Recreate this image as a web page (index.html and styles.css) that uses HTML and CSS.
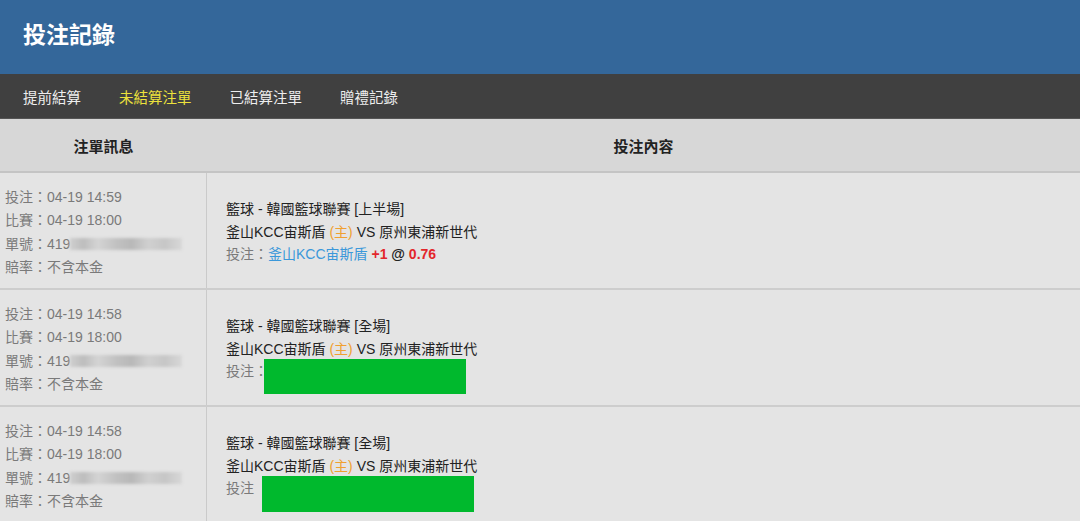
FILE: index.html
```html
<!DOCTYPE html>
<html lang="zh-Hant">

<head>
    <meta charset="UTF-8">
    <meta name="viewport" content="width=device-width, initial-scale=1.0">
    <title>投注記錄</title>
    <link rel="stylesheet" href="styles.css">
</head>

<body>
    <header class="topbar">
        <h1>投注記錄</h1>
    </header>
    <nav class="tabs">
        <a href="#">提前結算</a>
        <a href="#" class="active">未結算注單</a>
        <a href="#">已結算注單</a>
        <a href="#">贈禮記錄</a>
    </nav>

    <div class="table">
        <div class="row head">
            <div class="cell">注單訊息</div>
            <div class="cell">投注內容</div>
        </div>

        <div class="row">
            <div class="cell info">
                <div>投注：04-19 14:59</div>
                <div>比賽：04-19 18:00</div>
                <div>單號：419<span class="blur"></span></div>
                <div>賠率：不含本金</div>
            </div>
            <div class="cell detail">
                <div class="dark">籃球 - 韓國籃球聯賽 [上半場]</div>
                <div class="dark">釜山KCC宙斯盾 <span class="home">(主)</span> VS 原州東浦新世代</div>
                <div>投注：<span class="team">釜山KCC宙斯盾</span> <span class="red">+1</span> <span class="at">@</span> <span class="red">0.76</span></div>
            </div>
        </div>

        <div class="row">
            <div class="cell info">
                <div>投注：04-19 14:58</div>
                <div>比賽：04-19 18:00</div>
                <div>單號：419<span class="blur"></span></div>
                <div>賠率：不含本金</div>
            </div>
            <div class="cell detail">
                <div class="dark">籃球 - 韓國籃球聯賽 [全場]</div>
                <div class="dark">釜山KCC宙斯盾 <span class="home">(主)</span> VS 原州東浦新世代</div>
                <div class="bet">投注：<span class="mask"></span></div>
            </div>
        </div>

        <div class="row">
            <div class="cell info">
                <div>投注：04-19 14:58</div>
                <div>比賽：04-19 18:00</div>
                <div>單號：419<span class="blur"></span></div>
                <div>賠率：不含本金</div>
            </div>
            <div class="cell detail">
                <div class="dark">籃球 - 韓國籃球聯賽 [全場]</div>
                <div class="dark">釜山KCC宙斯盾 <span class="home">(主)</span> VS 原州東浦新世代</div>
                <div class="bet">投注<span class="mask wide"></span></div>
            </div>
        </div>
    </div>
</body>

</html>
```

FILE: styles.css
```css
* {
    box-sizing: border-box;
}

body {
    margin: 0;
    padding: 0;
    background: #e4e4e4;
    font-family: "Liberation Sans", "Noto Sans CJK TC", sans-serif;
    overflow: hidden;
}

.topbar {
    height: 74px;
    background: #34679a;
    display: flex;
    align-items: center;
    padding: 0 0 9px 23px;
}

.topbar h1 {
    margin: 0;
    color: #fff;
    font-size: 23px;
    font-weight: bold;
}

.tabs {
    height: 45px;
    background: #404040;
    display: flex;
    align-items: center;
    padding-left: 23px;
    gap: 38px;
    border-bottom: 1px solid #555;
}

.tabs a {
    color: #eee;
    font-size: 14.5px;
    text-decoration: none;
}

.tabs a.active {
    color: #ece13c;
}

.row {
    display: grid;
    grid-template-columns: 207px 1fr;
    border-bottom: 2px solid #cdcdcd;
}

.row.head {
    height: 54px;
    background: #d7d7d7;
    border-bottom: 2px solid #c4c4c4;
    font-size: 15px;
    font-weight: bold;
    color: #222;
}

.row.head .cell {
    display: flex;
    align-items: center;
    justify-content: center;
}

.row.head .cell:first-child {
    border-right: none;
}

.cell:first-child {
    border-right: 1px solid #cacaca;
}

.info {
    height: 115px;
    padding: 13px 0 0 5px;
    font-size: 14px;
    line-height: 23.3px;
    color: #7a7a7a;
}

.detail {
    padding: 25px 0 0 19px;
    font-size: 14px;
    line-height: 22.6px;
    color: #7a7a7a;
}

.dark {
    color: #222;
}

.home {
    color: #f0a030;
}

.team {
    color: #3b98da;
}

.red {
    color: #e3262b;
    font-weight: bold;
}

.at {
    color: #222;
    font-weight: bold;
}

.blur {
    display: inline-block;
    width: 112px;
    height: 12px;
    vertical-align: -1px;
    background: linear-gradient(90deg, #cfcfcf 0%, #bdbdbd 12%, #d4d4d4 25%, #c2c2c2 40%, #b8b8b8 55%, #d0d0d0 70%, #c6c6c6 85%, #d8d8d8 100%);
    filter: blur(1.5px);
}

.bet {
    display: flex;
    align-items: flex-start;
}

.mask {
    display: inline-block;
    width: 202px;
    height: 35px;
    margin-top: -1px;
    margin-left: -4px;
    background: #00b92d;
}

.mask.wide {
    width: 212px;
    height: 36px;
    margin-top: -1px;
    margin-left: 8px;
}
```
